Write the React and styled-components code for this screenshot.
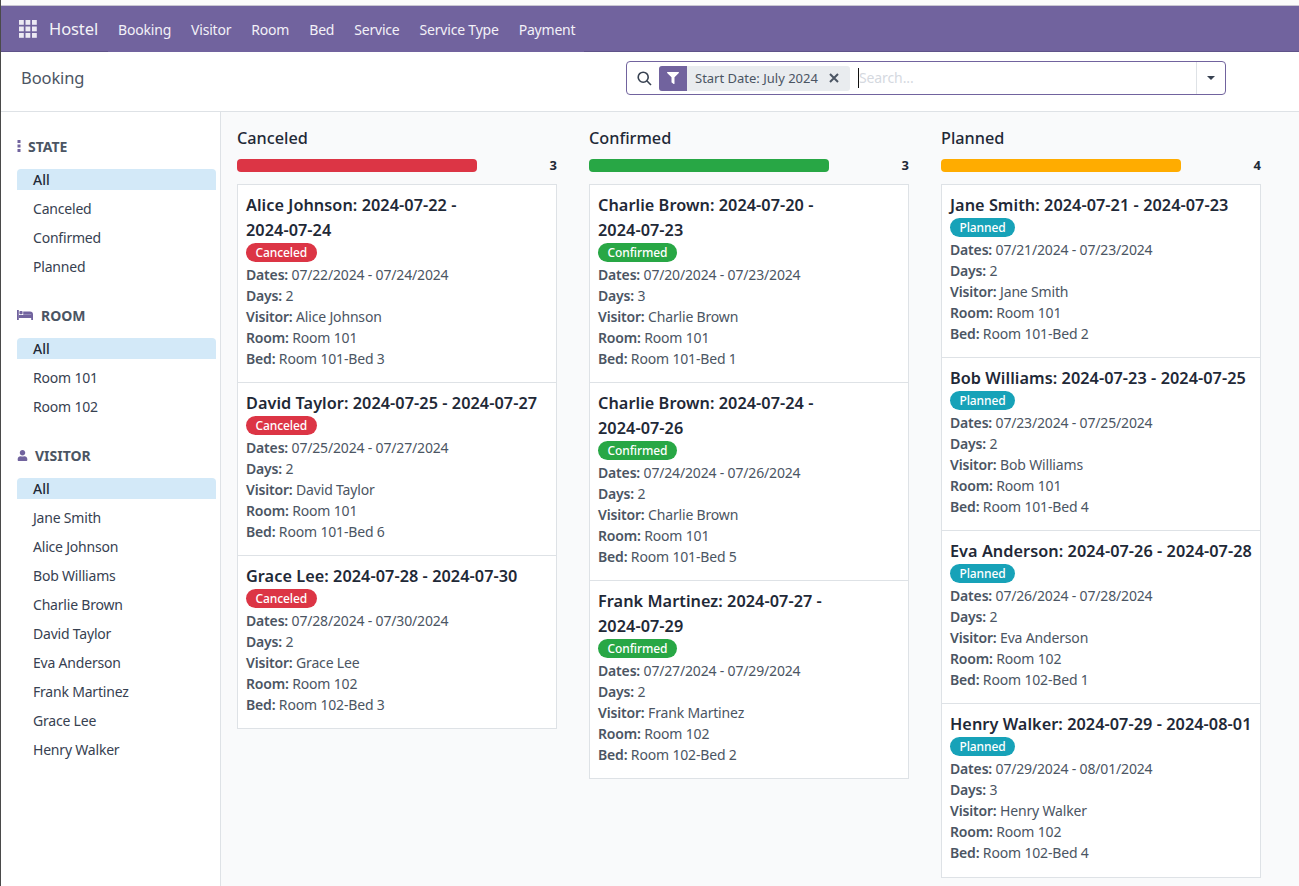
import React from 'react'
import styled, { createGlobalStyle } from 'styled-components'
import { FaFilter, FaUser } from 'react-icons/fa'

const GlobalStyle = createGlobalStyle`
    html, body {
        margin: 0;
        padding: 0;
        background: #fff;
    }
    body {
        font-family: 'Noto Sans', 'Open Sans', sans-serif;
        font-size: 14px;
        color: #374151;
        overflow: hidden;
    }
`

const Page = styled.div`
    width: 1299px;
    height: 886px;
    display: flex;
    flex-direction: column;
    box-sizing: border-box;
    border-left: 1px solid #4a4a4a;
    overflow: hidden;
`

const TopStrip = styled.div`
    height: 5px;
    margin-left: -1px;
    background: #fbfbfb;
    border-bottom: 1px solid #c9c6d2;
    flex: none;
`

const Navbar = styled.nav`
    height: 46px;
    flex: none;
    display: flex;
    align-items: center;
    background: #71639e;
    border-bottom: 1px solid #5f5389;
    color: #fff;
    padding-left: 18px;
    box-sizing: border-box;
`

const Brand = styled.span`
    font-size: 16.5px;
    margin-left: 12px;
    margin-right: 10px;
    letter-spacing: -0.1px;
    opacity: 0.92;
`

// the sections menu sits over the navbar's bottom line
const NavLinks = styled.div`
    align-self: stretch;
    margin-bottom: -1px;
    display: flex;
    align-items: center;
    gap: 20px;
    padding: 0 9px 0 10px;
    background: #71639e;
`

const NavLink = styled.a`
    font-size: 14px;
    letter-spacing: -0.2px;
    color: #f3f1f8;
`

const ControlPanel = styled.header`
    height: 60px;
    flex: none;
    display: flex;
    align-items: center;
    background: #fff;
    border-bottom: 1px solid #dee2e6;
    box-sizing: border-box;
    padding: 0 0 7px 20px;
`

const PageTitle = styled.div`
    font-size: 16.5px;
    color: #4b5563;
    letter-spacing: -0.1px;
    width: 605px;
    margin-bottom: 2px;
    flex: none;
`

const SearchBox = styled.div`
    width: 600px;
    height: 34px;
    border: 1px solid #71639e;
    border-radius: 4px;
    display: flex;
    align-items: center;
    box-sizing: border-box;
`

const SearchIcon = styled.svg`
    width: 15px;
    height: 15px;
    margin-left: 10px;
    margin-right: 7px;
    flex: none;
`

const Facet = styled.div`
    display: flex;
    align-items: center;
    height: 25px;
    background: #e9ecef;
    border-radius: 3px;
    overflow: hidden;
    font-size: 13px;
    color: #4b5563;
    flex: none;
`

const FacetIcon = styled.span`
    width: 28px;
    height: 25px;
    background: #71639e;
    color: #fff;
    display: flex;
    align-items: center;
    justify-content: center;
    font-size: 12px;
`

const FacetLabel = styled.span`
    margin-left: 8px;
`

const FacetClose = styled.svg`
    width: 10px;
    height: 10px;
    margin: 0 11px;
`

const SearchInput = styled.div`
    flex: 1;
    height: 20px;
    line-height: 20px;
    margin-left: 8px;
    border-left: 1px solid #111;
    color: #d5d9df;
    font-size: 14px;
    letter-spacing: -0.1px;
`

const SearchCaret = styled.div`
    width: 28px;
    height: 32px;
    border-left: 1px solid #dee2e6;
    display: flex;
    align-items: center;
    justify-content: center;
    &::after {
        content: '';
        border-left: 4px solid transparent;
        border-right: 4px solid transparent;
        border-top: 4px solid #374151;
    }
`

const Body = styled.div`
    flex: 1;
    display: flex;
    min-height: 0;
`

const Sidebar = styled.aside`
    width: 220px;
    flex: none;
    box-sizing: border-box;
    background: #fff;
    border-right: 1px solid #dee2e6;
    padding: 24px 4px 0 16px;
`

const FilterGroup = styled.section`
    margin-bottom: 28px;
`

const FilterHeader = styled.div`
    display: flex;
    align-items: center;
    height: 22px;
    box-sizing: border-box;
    padding-bottom: 2px;
    margin-bottom: 11px;
    font-weight: 700;
    font-size: 14px;
    color: #4b5563;
    svg {
        color: #71639e;
        flex: none;
    }
`

const HeaderLabel = styled.span`
    margin-left: ${p => p.$gap}px;
`

const FilterItem = styled.div`
    height: 21px;
    line-height: 21px;
    padding-left: 16px;
    margin-bottom: 8px;
    color: ${p => (p.$active ? '#1f2937' : '#374151')};
    background: ${p => (p.$active ? '#d3e9f8' : 'transparent')};
    font-weight: ${p => (p.$active ? 500 : 400)};
    border-radius: 4px 4px 0 0;
    font-size: 14px;
    letter-spacing: ${p => (p.$active ? '0' : '-0.2px')};
    &:last-child {
        margin-bottom: 0;
    }
`

const Board = styled.main`
    flex: 1;
    display: flex;
    gap: 32px;
    background: #f9fafb;
    padding: 14px 0 0 16px;
    min-width: 0;
`

const Column = styled.div`
    width: 320px;
    flex: none;
`

const ColumnTitle = styled.div`
    font-size: 16.25px;
    font-weight: 500;
    line-height: 25px;
    color: #1f2937;
`

const ProgressRow = styled.div`
    display: flex;
    align-items: center;
    justify-content: space-between;
    height: 14px;
    margin-top: 7px;
    margin-bottom: 12.2px;
`

const ProgressBar = styled.div`
    width: 240px;
    height: 13px;
    border-radius: 4px;
    background: ${p => p.$color};
`

const ProgressCount = styled.span`
    font-size: 13px;
    font-weight: 700;
    color: #1f2937;
`

const Card = styled.article`
    box-sizing: border-box;
    background: #fff;
    border: 1px solid #dee2e6;
    padding: 7.5px 8px 13.1px;
    & + & {
        margin-top: -1px;
    }
`

const CardTitle = styled.div`
    font-size: 16.25px;
    font-weight: 600;
    line-height: 25px;
    letter-spacing: 0.05px;
    color: #1f2937;
`

const Badge = styled.span`
    display: block;
    width: fit-content;
    height: 19px;
    line-height: 19px;
    margin: 0.5px 0 2px;
    padding: 0 9.5px;
    border-radius: 10px;
    background: ${p => p.$color};
    color: #fff;
    font-size: 12px;
    font-weight: 500;
    letter-spacing: -0.1px;
`

const Detail = styled.div`
    line-height: 21px;
    font-size: 14px;
    letter-spacing: -0.17px;
    color: #4b5563;
    b {
        font-weight: 600;
    }
`

const AppsIcon = () => (
    <svg width="18" height="18" viewBox="0 0 18 18" fill="#ece9f3">
        {[0, 6.5, 13].map(y =>
            [0, 6.5, 13].map(x => <rect key={`${x}-${y}`} x={x} y={y} width="4.8" height="4.8" />)
        )}
    </svg>
)

const DotsIcon = () => (
    <svg width="4" height="12" viewBox="0 0 4 12" fill="currentColor">
        <rect x="0.5" y="0" width="3" height="3" />
        <rect x="0.5" y="4.5" width="3" height="3" />
        <rect x="0.5" y="9" width="3" height="3" />
    </svg>
)

const BedIcon = () => (
    <svg width="16" height="10" viewBox="0 0 16 10" fill="currentColor">
        <rect x="0" y="0" width="1.8" height="10" />
        <rect x="2.4" y="1" width="3.2" height="3.2" rx="1" />
        <path d="M6.2 1.5 H13 A3 3 0 0 1 16 4.5 V10 H14.2 V8 H1.8 V5 H14.2 V4.8 H6.2 Z" />
    </svg>
)

const STATES = {
    Canceled: '#dc3545',
    Confirmed: '#28a745',
    Planned: '#17a2b8',
}

// last field: the title breaks after the dash in the reference layout
const BOARD = [
    {
        title: 'Canceled',
        color: '#dc3545',
        cards: [
            ['Alice Johnson', '2024-07-22', '2024-07-24', 2, 'Room 101', 'Room 101-Bed 3', true],
            ['David Taylor', '2024-07-25', '2024-07-27', 2, 'Room 101', 'Room 101-Bed 6'],
            ['Grace Lee', '2024-07-28', '2024-07-30', 2, 'Room 102', 'Room 102-Bed 3'],
        ],
    },
    {
        title: 'Confirmed',
        color: '#28a745',
        cards: [
            ['Charlie Brown', '2024-07-20', '2024-07-23', 3, 'Room 101', 'Room 101-Bed 1', true],
            ['Charlie Brown', '2024-07-24', '2024-07-26', 2, 'Room 101', 'Room 101-Bed 5', true],
            ['Frank Martinez', '2024-07-27', '2024-07-29', 2, 'Room 102', 'Room 102-Bed 2', true],
        ],
    },
    {
        title: 'Planned',
        color: '#ffac00',
        cards: [
            ['Jane Smith', '2024-07-21', '2024-07-23', 2, 'Room 101', 'Room 101-Bed 2'],
            ['Bob Williams', '2024-07-23', '2024-07-25', 2, 'Room 101', 'Room 101-Bed 4'],
            ['Eva Anderson', '2024-07-26', '2024-07-28', 2, 'Room 102', 'Room 102-Bed 1'],
            ['Henry Walker', '2024-07-29', '2024-08-01', 3, 'Room 102', 'Room 102-Bed 4'],
        ],
    },
]

const FILTERS = [
    { label: 'STATE', icon: <DotsIcon />, gap: 7, items: ['All', 'Canceled', 'Confirmed', 'Planned'] },
    { label: 'ROOM', icon: <BedIcon />, gap: 8, items: ['All', 'Room 101', 'Room 102'] },
    {
        label: 'VISITOR',
        icon: <FaUser size={11} />,
        gap: 7,
        items: [
            'All',
            'Jane Smith',
            'Alice Johnson',
            'Bob Williams',
            'Charlie Brown',
            'David Taylor',
            'Eva Anderson',
            'Frank Martinez',
            'Grace Lee',
            'Henry Walker',
        ],
    },
]

// 2024-07-22 -> 07/22/2024
const usDate = iso => {
    const [y, m, d] = iso.split('-')
    return `${m}/${d}/${y}`
}

const BookingCard = ({ state, data }) => {
    const [visitor, start, end, days, room, bed, wraps] = data
    return (
        <Card>
            <CardTitle>
                {visitor}: {start} -{wraps ? <br /> : ' '}
                {end}
            </CardTitle>
            <Badge $color={STATES[state]}>{state}</Badge>
            <Detail>
                <b>Dates:</b> {usDate(start)} - {usDate(end)}
            </Detail>
            <Detail>
                <b>Days:</b> {days}
            </Detail>
            <Detail>
                <b>Visitor:</b> {visitor}
            </Detail>
            <Detail>
                <b>Room:</b> {room}
            </Detail>
            <Detail>
                <b>Bed:</b> {bed}
            </Detail>
        </Card>
    )
}

export default function App() {
    return (
        <Page>
            <GlobalStyle />
            <TopStrip />
            <Navbar>
                <AppsIcon />
                <Brand>Hostel</Brand>
                <NavLinks>
                    {['Booking', 'Visitor', 'Room', 'Bed', 'Service', 'Service Type', 'Payment'].map(l => (
                        <NavLink key={l}>{l}</NavLink>
                    ))}
                </NavLinks>
            </Navbar>
            <ControlPanel>
                <PageTitle>Booking</PageTitle>
                <SearchBox>
                    <SearchIcon viewBox="0 0 15 15" fill="none" stroke="#374151" strokeWidth="1.6">
                        <circle cx="6.2" cy="6.2" r="5" />
                        <path d="M9.8 9.8 L14 14" />
                    </SearchIcon>
                    <Facet>
                        <FacetIcon>
                            <FaFilter />
                        </FacetIcon>
                        <FacetLabel>Start Date: July 2024</FacetLabel>
                        <FacetClose viewBox="0 0 10 10" stroke="#4b5563" strokeWidth="2">
                            <path d="M1 1 L9 9 M9 1 L1 9" />
                        </FacetClose>
                    </Facet>
                    <SearchInput>Search...</SearchInput>
                    <SearchCaret />
                </SearchBox>
            </ControlPanel>
            <Body>
                <Sidebar>
                    {FILTERS.map(f => (
                        <FilterGroup key={f.label}>
                            <FilterHeader>
                                {f.icon}
                                <HeaderLabel $gap={f.gap}>{f.label}</HeaderLabel>
                            </FilterHeader>
                            {f.items.map((item, i) => (
                                <FilterItem key={item} $active={i === 0}>
                                    {item}
                                </FilterItem>
                            ))}
                        </FilterGroup>
                    ))}
                </Sidebar>
                <Board>
                    {BOARD.map(col => (
                        <Column key={col.title}>
                            <ColumnTitle>{col.title}</ColumnTitle>
                            <ProgressRow>
                                <ProgressBar $color={col.color} />
                                <ProgressCount>{col.cards.length}</ProgressCount>
                            </ProgressRow>
                            {col.cards.map(card => (
                                <BookingCard key={card[1]} state={col.title} data={card} />
                            ))}
                        </Column>
                    ))}
                </Board>
            </Body>
        </Page>
    )
}
